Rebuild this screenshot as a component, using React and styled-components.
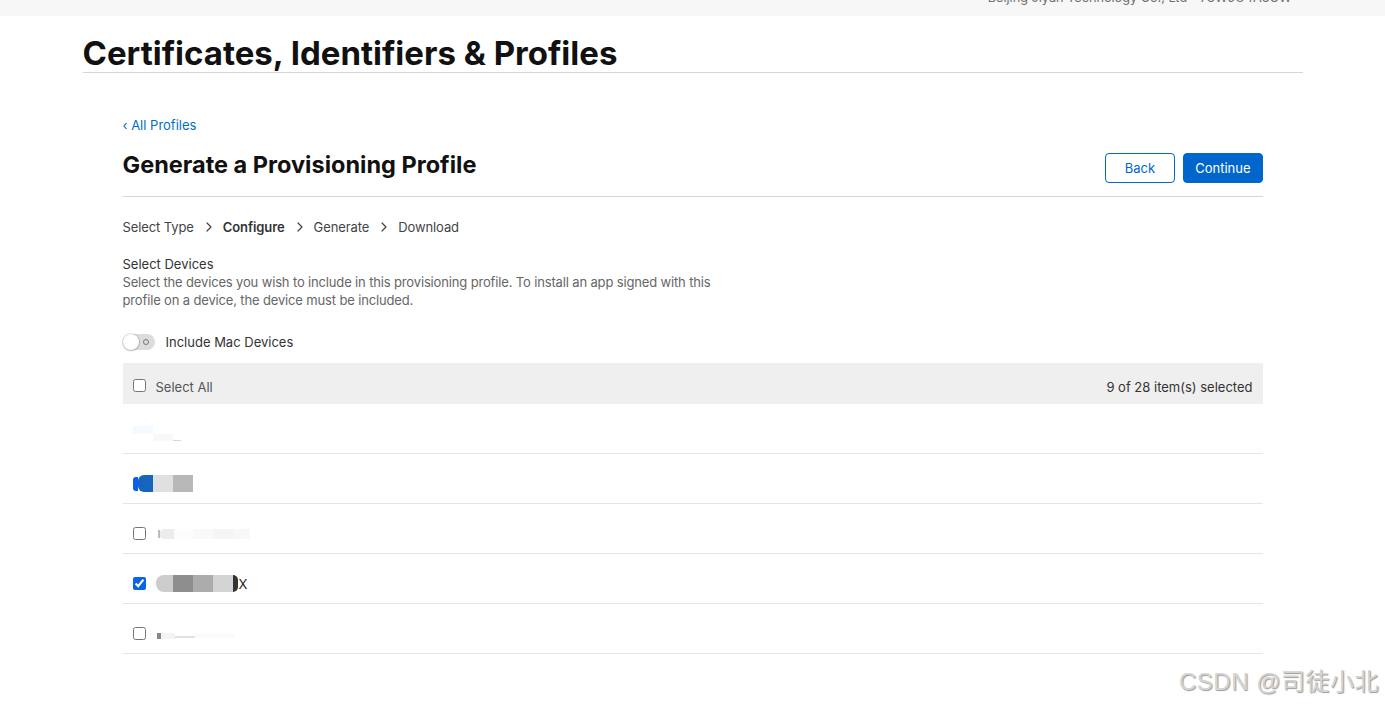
import React from "react";
import styled, { createGlobalStyle } from "styled-components";

const Global = createGlobalStyle`
  html, body { margin: 0; padding: 0; background: #fff; }
  body { font-family: Inter, "Noto Sans", "Liberation Sans", sans-serif; color: #1d1d1f; -webkit-font-smoothing: antialiased; }
  * { box-sizing: border-box; }
`;

const Page = styled.div`
  position: relative;
  width: 1385px;
  height: 705px;
  overflow: hidden;
  background: #fff;
`;

const TopBar = styled.div`
  height: 16px;
  background: #f7f7f7;
  overflow: hidden;
`;

const TopBarInner = styled.div`
  width: 1220px;
  margin: 0 auto;
  display: flex;
  justify-content: flex-end;
  padding-right: 11px;
`;

const Account = styled.span`
  font-size: 12.7px;
  line-height: 14px;
  color: #6e6e73;
  margin-top: -9px;
`;

const Main = styled.div`
  width: 1220px;
  margin: 0 auto;
`;

const PageTitle = styled.h1`
  margin: 0;
  padding-top: 18px;
  height: 57px;
  font-size: 33px;
  line-height: 38px;
  font-weight: 700;
  letter-spacing: 0;
  color: #111;
  border-bottom: 1px solid #d6d6d6;
`;

const Content = styled.div`
  width: 1140px;
  margin: 0 auto;
`;

const BackLink = styled.a`
  display: inline-block;
  margin-top: 43px;
  font-size: 13px;
  line-height: 18px;
  color: #0070c9;
  text-decoration: none;
`;

const HeaderRow = styled.div`
  display: flex;
  align-items: flex-end;
  justify-content: space-between;
  margin-top: 17px;
  padding-bottom: 13px;
  border-bottom: 1px solid #d6d6d6;
`;

const PageHeading = styled.h2`
  margin: 0 0 4px;
  font-size: 23.5px;
  line-height: 28px;
  font-weight: 700;
  letter-spacing: 0;
  color: #111;
`;

const Buttons = styled.div`
  display: flex;
  gap: 8px;
`;

const Button = styled.button`
  height: 30px;
  padding: 0 ${p => (p.$primary ? "11px" : "19px")};
  font-family: inherit;
  font-size: 13px;
  border-radius: 4px;
  border: 1px solid #0066cc;
  background: ${p => (p.$primary ? "#0066cc" : "#fff")};
  color: ${p => (p.$primary ? "#fff" : "#0066cc")};
  cursor: pointer;
`;

const Steps = styled.div`
  display: flex;
  align-items: center;
  margin-top: 21px;
  font-size: 13px;
  line-height: 18px;
  color: #333;
  letter-spacing: -0.1px;
`;

const Step = styled.span`
  font-weight: ${p => (p.$active ? 600 : 400)};
  color: ${p => (p.$active ? "#333" : "#444")};
`;

const Chevron = styled.span`
  display: inline-flex;
  margin: 0 11px 0 12px;
  color: #444;
`;

const Section = styled.div`
  margin-top: 19px;
`;

const SectionTitle = styled.div`
  font-size: 13px;
  line-height: 18px;
  color: #333;
`;

const SectionText = styled.p`
  margin: 0;
  max-width: 620px;
  font-size: 13px;
  line-height: 18px;
  letter-spacing: -0.15px;
  color: #666;
`;

const ToggleRow = styled.label`
  display: flex;
  align-items: center;
  gap: 11px;
  margin-top: 25px;
  font-size: 13px;
  color: #333;
`;

const Toggle = styled.span`
  position: relative;
  display: inline-block;
  width: 32px;
  height: 16px;
  border-radius: 8px;
  background: #dcdcdc;
`;

const Knob = styled.span`
  position: absolute;
  left: 0;
  top: 0;
  width: 16px;
  height: 16px;
  border-radius: 50%;
  background: #fff;
  box-shadow: 0 0 0 1px rgba(0, 0, 0, 0.12), 0 1px 2px rgba(0, 0, 0, 0.2);
`;

const OffMark = styled.span`
  position: absolute;
  right: 6px;
  top: 5px;
  width: 6px;
  height: 6px;
  border-radius: 50%;
  border: 1px solid #777;
`;

const Table = styled.div`
  margin-top: 13px;
`;

const TableHead = styled.div`
  display: flex;
  align-items: center;
  justify-content: space-between;
  height: 41px;
  padding: 7px 10px 0;
  background: #efefef;
  font-size: 13px;
  color: #555;
`;

const CheckLabel = styled.label`
  display: flex;
  align-items: center;
  gap: 10px;
`;

const Check = styled.input.attrs({ type: "checkbox" })`
  margin: 0;
  width: 13px;
  height: 13px;
  accent-color: #0b63e5;
  position: relative;
  top: ${p => (p.$offset ? p.$offset : "0")};
`;

const Count = styled.span`
  color: #333;
`;

const Row = styled.div`
  display: flex;
  align-items: center;
  gap: 10px;
  height: 50px;
  padding: 10px 10px 0;
  border-bottom: 1px solid #e6e6e6;
`;

const Redacted = styled.span`
  display: flex;
  align-items: ${p => p.$align || "center"};
  margin-left: ${p => p.$shift || "0"};
`;

const Tile = styled.span`
  display: block;
  width: ${p => p.$w}px;
  height: ${p => p.$h}px;
  background: ${p => p.$c};
  border-radius: ${p => p.$r || "0"};
  margin-top: ${p => p.$dy || 0}px;
`;

const TailX = styled.span`
  font-size: 13px;
  color: #222;
  margin-left: 1px;
`;

const Watermark = styled.div`
  position: absolute;
  right: 6px;
  bottom: 8px;
  font-family: "Liberation Sans", "Noto Sans CJK SC", sans-serif;
  font-size: 24px;
  letter-spacing: 0.5px;
  color: #d4d4d4;
  text-shadow: 1px 1px 1px #9a9a9a;
`;

const ChevronIcon = () => (
  <svg width="6" height="10" viewBox="0 0 6 10" fill="none">
    <path d="M1 1l4 4-4 4" stroke="currentColor" strokeWidth="1.2" strokeLinecap="round" strokeLinejoin="round" />
  </svg>
);

const steps = ["Select Type", "Configure", "Generate", "Download"];

export default function App() {
  return (
    <Page>
      <Global />
      <TopBar>
        <TopBarInner>
          <Account>Beijing Jiyan Technology Co., Ltd - 73W9U4A3GW</Account>
        </TopBarInner>
      </TopBar>
      <Main>
        <PageTitle>Certificates, Identifiers &amp; Profiles</PageTitle>
        <Content>
          <BackLink href="#">‹ All Profiles</BackLink>
          <HeaderRow>
            <PageHeading>Generate a Provisioning Profile</PageHeading>
            <Buttons>
              <Button>Back</Button>
              <Button $primary>Continue</Button>
            </Buttons>
          </HeaderRow>
          <Steps>
            {steps.map((s, i) => (
              <React.Fragment key={s}>
                {i > 0 && (
                  <Chevron>
                    <ChevronIcon />
                  </Chevron>
                )}
                <Step $active={s === "Configure"}>{s}</Step>
              </React.Fragment>
            ))}
          </Steps>
          <Section>
            <SectionTitle>Select Devices</SectionTitle>
            <SectionText>
              Select the devices you wish to include in this provisioning profile. To install an app signed with this
              profile on a device, the device must be included.
            </SectionText>
          </Section>
          <ToggleRow>
            <Toggle>
              <OffMark />
              <Knob />
            </Toggle>
            Include Mac Devices
          </ToggleRow>
          <Table>
            <TableHead>
              <CheckLabel>
                <Check $offset="-2px" />
                Select All
              </CheckLabel>
              <Count>9 of 28 item(s) selected</Count>
            </TableHead>
            <Row>
              <Redacted $align="flex-start">
                <Tile $w={20} $h={8} $c="#f4faff" />
                <Tile $w={20} $h={7} $c="#f8f8f8" $dy={8} />
                <Tile $w={8} $h={1} $c="#d8d8d8" $dy={14} />
              </Redacted>
            </Row>
            <Row>
              <Redacted>
                <Tile $w={5} $h={14} $c="#0a5ff0" $r="3px 0 0 3px" />
                <Tile $w={15} $h={17} $c="#1565c0" $r="6px 0 0 6px" />
                <Tile $w={20} $h={17} $c="#e0e0e0" />
                <Tile $w={20} $h={17} $c="#b8b8b8" />
              </Redacted>
            </Row>
            <Row>
              <Check />
              <Redacted $shift="2px">
                <Tile $w={2} $h={8} $c="#bbb" />
                <Tile $w={14} $h={10} $c="#ececec" $r="4px 0 0 4px" />
                <Tile $w={20} $h={10} $c="#fcfcfc" />
                <Tile $w={20} $h={10} $c="#f9f9f9" />
                <Tile $w={20} $h={10} $c="#f5f5f5" />
                <Tile $w={16} $h={10} $c="#f8f8f8" />
              </Redacted>
            </Row>
            <Row>
              <Check defaultChecked />
              <Redacted>
                <Tile $w={17} $h={17} $c="#cccccc" $r="8px 0 0 8px" />
                <Tile $w={20} $h={17} $c="#8e8e8e" />
                <Tile $w={20} $h={17} $c="#acacac" />
                <Tile $w={20} $h={17} $c="#d4d4d4" />
                <Tile $w={5} $h={17} $c="#333" $r="0 8px 8px 0" />
                <TailX>X</TailX>
              </Redacted>
            </Row>
            <Row>
              <Check />
              <Redacted $shift="1px">
                <Tile $w={4} $h={6} $c="#888" $dy={4} />
                <Tile $w={14} $h={6} $c="#f3f3f3" $dy={4} />
                <Tile $w={20} $h={2} $c="#e2e2e2" $dy={6} />
                <Tile $w={40} $h={5} $c="#fbfbfb" $dy={4} />
              </Redacted>
            </Row>
          </Table>
        </Content>
      </Main>
      <Watermark>CSDN @司徒小北</Watermark>
    </Page>
  );
}
